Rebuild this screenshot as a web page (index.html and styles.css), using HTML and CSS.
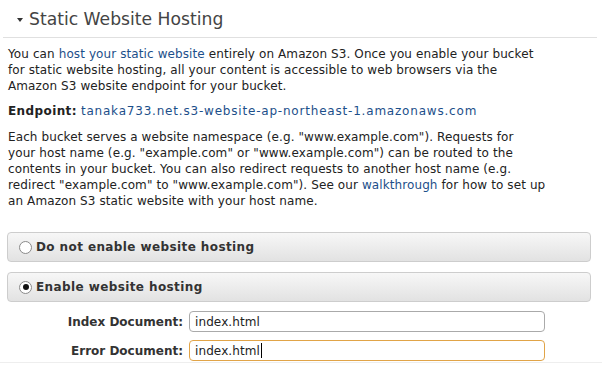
FILE: index.html
```html
<!DOCTYPE html>
<html>

<head>
    <meta charset="utf-8">
    <title>Static Website Hosting</title>
    <link rel="stylesheet" href="styles.css">
</head>

<body>
    <div class="panel">
        <div class="panel-header">
            <span class="caret"></span>
            <h2>Static Website Hosting</h2>
        </div>
        <div class="panel-body">
            <p>You can <a href="#">host your static website</a> entirely on Amazon S3. Once you enable your bucket<br>
                for static website hosting, all your content is accessible to web browsers via the<br>
                Amazon S3 website endpoint for your bucket.</p>
            <p class="endpoint"><b>Endpoint:</b> <a href="#">tanaka733.net.s3-website-ap-northeast-1.amazonaws.com</a></p>
            <p>Each bucket serves a website namespace (e.g. "www.example.com"). Requests for<br>
                your host name (e.g. "example.com" or "www.example.com") can be routed to the<br>
                contents in your bucket. You can also redirect requests to another host name (e.g.<br>
                redirect "example.com" to "www.example.com"). See our <a href="#">walkthrough</a> for how to set up<br>
                an Amazon S3 static website with your host name.</p>

            <div class="options">
                <label class="option">
                    <input type="radio" name="hosting">
                    <span>Do not enable website hosting</span>
                </label>
                <label class="option">
                    <input type="radio" name="hosting" checked>
                    <span>Enable website hosting</span>
                </label>
            </div>
        </div>

        <div class="fields">
            <label class="field-label" for="indexDoc">Index Document:</label>
            <input class="field" id="indexDoc" type="text" value="index.html">
            <label class="field-label" for="errorDoc">Error Document:</label>
            <div class="field focused">index.html<span class="cursor"></span></div>
        </div>
    </div>
</body>

</html>
```

FILE: styles.css
```css
* {
    box-sizing: border-box;
}

body {
    margin: 0;
    background-color: #fff;
    font-family: 'DejaVu Sans', Verdana, sans-serif;
    font-size: 12px;
    letter-spacing: 0.1px;
    color: #222;
    overflow: hidden;
}

b {
    letter-spacing: 0.4px;
}

a {
    color: #1d4f8a;
    text-decoration: none;
}

.endpoint a {
    letter-spacing: 0.8px;
}

.panel {
    width: 602px;
}

.panel-header {
    display: flex;
    align-items: center;
    gap: 6px;
    margin: 0 5px 0 3px;
    padding: 8px 0 7px 14px;
    border-bottom: 1px solid #e0e0e0;
}

.caret {
    width: 0;
    height: 0;
    margin-top: 1px;
    border-left: 3px solid transparent;
    border-right: 3px solid transparent;
    border-top: 4px solid #333;
}

h2 {
    margin: 0;
    font-size: 17.2px;
    font-weight: normal;
    letter-spacing: 0;
    color: #444;
    line-height: 22px;
}

.panel-body {
    padding: 8px 11px 0 7px;
}

p {
    margin: 0 0 9px 1px;
    line-height: 16px;
}

.endpoint {
    margin-bottom: 10px;
}

.options {
    display: flex;
    flex-direction: column;
    gap: 10px;
    margin-top: 23px;
}

.option {
    display: flex;
    align-items: center;
    gap: 4px;
    height: 30px;
    padding: 0 11px;
    border: 1px solid #cdcdcd;
    border-radius: 4px;
    background: linear-gradient(#f7f7f7, #e2e2e2);
    font-weight: bold;
    letter-spacing: 0.4px;
    color: #333;
    cursor: pointer;
}

.option input {
    appearance: none;
    display: grid;
    place-items: center;
    margin: 0;
    width: 13px;
    height: 13px;
    border: 1px solid #8a8a8a;
    border-radius: 50%;
    background: #fff;
}

.option input:checked::after {
    content: "";
    width: 6px;
    height: 6px;
    border-radius: 50%;
    background: #111;
}

.fields {
    display: grid;
    grid-template-columns: 183px 356px;
    column-gap: 6px;
    row-gap: 8px;
    align-items: center;
    margin-top: 9px;
    padding-bottom: 1px;
    border-bottom: 1px solid #eee;
}

.field-label {
    text-align: right;
    font-weight: bold;
    letter-spacing: 0;
    color: #333;
}

.field {
    display: flex;
    align-items: center;
    height: 21px;
    padding: 0 5px;
    border: 1px solid #aaa;
    border-radius: 4px;
    background: #fff;
    font-family: 'DejaVu Sans', Verdana, sans-serif;
    font-size: 12px;
    letter-spacing: 0.1px;
    color: #222;
    outline: none;
}

.field.focused {
    border-color: #e1a448;
}

.cursor {
    width: 1px;
    height: 15px;
    margin-left: 1px;
    background: #000;
}
```
